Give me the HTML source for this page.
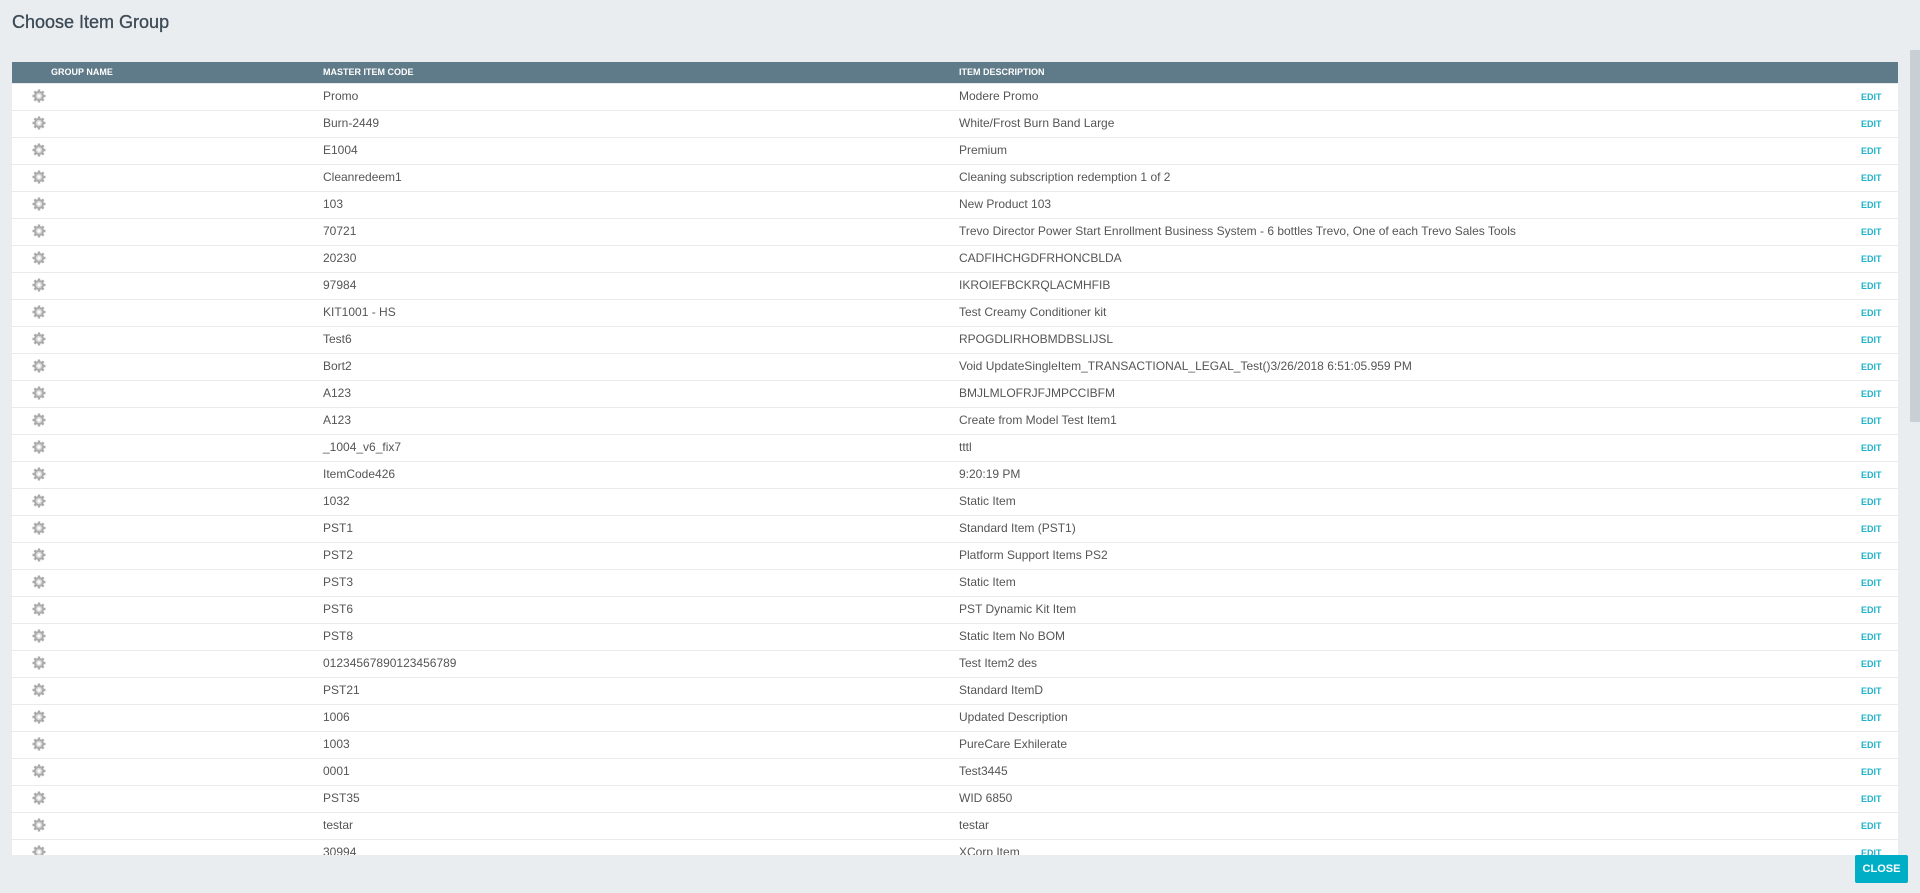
<!DOCTYPE html>
<html><head><style>
body{margin:0;width:1920px;height:893px;background:#e9edf0;font-family:"Liberation Sans",sans-serif;overflow:hidden;position:relative}
h1{position:absolute;left:12px;top:12px;margin:0;font-size:18px;font-weight:normal;color:#3c4a55;-webkit-text-stroke:0.3px #3c4a55}
.tbl{position:absolute;left:12px;top:62px;width:1886px;height:793px;overflow:hidden;background:#fff}
.hd{height:21px;background:#5f7a88;color:#fff;font-size:9px;font-weight:bold;position:relative;border-bottom:1px solid #e6e9eb}
.hd span{position:absolute;top:5px}
.r{height:26px;border-bottom:1px solid #e8eaec;position:relative;font-size:12px;color:#555}
.r span{position:absolute;top:5px}
.c1{left:311px}.c2{left:947px}
.e{left:1849px;color:#1fb2c8;font-size:9px;font-weight:bold;top:8px!important}
.g{position:absolute;left:20px;top:5px;width:14px;height:14px}
.sb{position:absolute;left:1910px;top:50px;width:10px;height:372px;background:#c8d0d5}
.btn{position:absolute;left:1855px;top:855px;width:53px;height:28px;background:#00aec6;color:#fff;font-size:11px;font-weight:bold;line-height:28px;text-align:center;border-radius:2px}
</style></head><body>
<h1>Choose Item Group</h1>
<div class="sb"></div>
<div class="tbl">
<div class="hd"><span style="left:39px">GROUP NAME</span><span style="left:311px">MASTER ITEM CODE</span><span style="left:947px">ITEM DESCRIPTION</span></div>
<div id="rows"></div>
</div>
<div class="btn">CLOSE</div>
<script>
var d=[["Promo","Modere Promo"],["Burn-2449","White/Frost Burn Band Large"],["E1004","Premium"],["Cleanredeem1","Cleaning subscription redemption 1 of 2"],["103","New Product 103"],["70721","Trevo Director Power Start Enrollment Business System - 6 bottles Trevo, One of each Trevo Sales Tools"],["20230","CADFIHCHGDFRHONCBLDA"],["97984","IKROIEFBCKRQLACMHFIB"],["KIT1001 - HS","Test Creamy Conditioner kit"],["Test6","RPOGDLIRHOBMDBSLIJSL"],["Bort2","Void UpdateSingleItem_TRANSACTIONAL_LEGAL_Test()3/26/2018 6:51:05.959 PM"],["A123","BMJLMLOFRJFJMPCCIBFM"],["A123","Create from Model Test Item1"],["_1004_v6_fix7","tttl"],["ItemCode426","9:20:19 PM"],["1032","Static Item"],["PST1","Standard Item (PST1)"],["PST2","Platform Support Items PS2"],["PST3","Static Item"],["PST6","PST Dynamic Kit Item"],["PST8","Static Item No BOM"],["01234567890123456789","Test Item2 des"],["PST21","Standard ItemD"],["1006","Updated Description"],["1003","PureCare Exhilerate"],["0001","Test3445"],["PST35","WID 6850"],["testar","testar"],["30994","XCorp Item"]];
var g='<svg class="g" viewBox="0 0 14 14"><g fill="#aaa"><circle cx="7" cy="7" r="5"/><g stroke="#aaa" stroke-width="2.4"><line x1="7" y1="0.5" x2="7" y2="13.5"/><line x1="0.5" y1="7" x2="13.5" y2="7"/><line x1="2.4" y1="2.4" x2="11.6" y2="11.6"/><line x1="11.6" y1="2.4" x2="2.4" y2="11.6"/></g></g><circle cx="7" cy="7" r="3.2" fill="#d8d8d8"/><circle cx="7" cy="7" r="1.6" fill="#fff"/></svg>';
var h='';d.forEach(function(x){h+='<div class="r">'+g+'<span class="c1">'+x[0]+'</span><span class="c2">'+x[1]+'</span><span class="e">EDIT</span></div>'});
document.getElementById('rows').innerHTML=h;
</script>
</body></html>
